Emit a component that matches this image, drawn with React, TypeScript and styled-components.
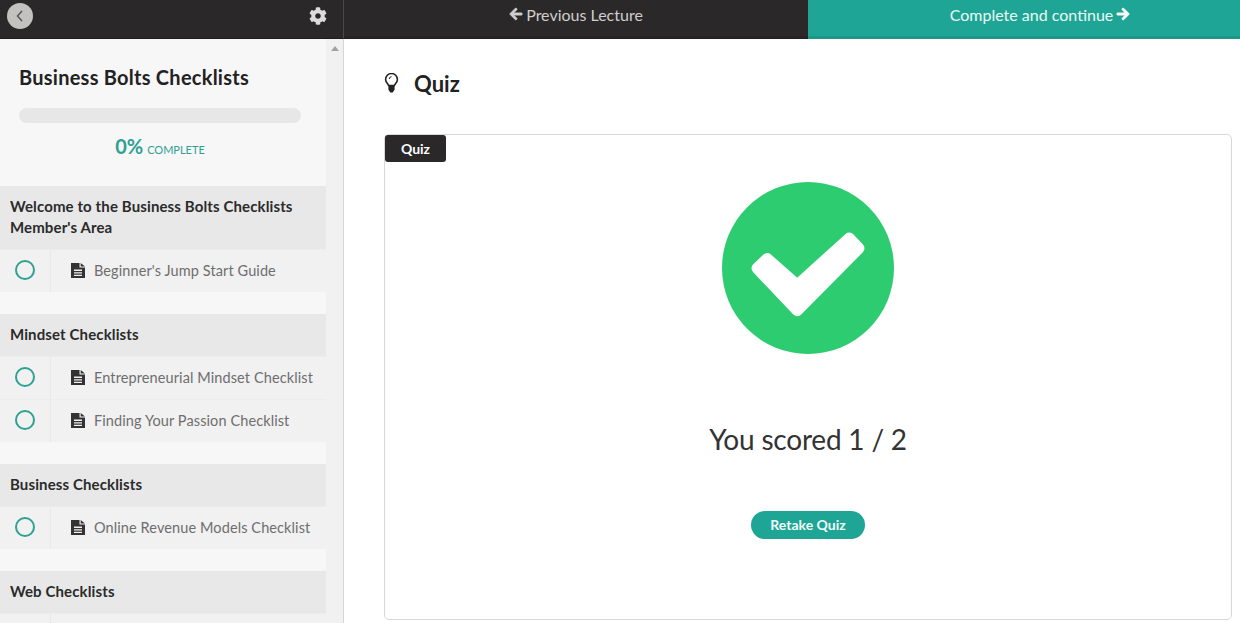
import React from "react";
import styled, { createGlobalStyle } from "styled-components";
import { FaArrowLeft, FaArrowRight, FaCog } from "react-icons/fa";

const Global = createGlobalStyle`
  html, body { margin: 0; padding: 0; height: 623px; overflow: hidden; background: #fff; }
  body { font-family: Lato, "Liberation Sans", sans-serif; color: #2b2b2b; }
  * { box-sizing: border-box; }
`;

const Page = styled.div`
  width: 1240px;
  height: 623px;
  display: flex;
  flex-direction: column;
  overflow: hidden;
`;

const TopBar = styled.header`
  height: 39px;
  flex: none;
  display: flex;
  background: #2a2828;
`;

const BarSide = styled.div`
  width: 344px;
  flex: none;
  display: flex;
  align-items: center;
  justify-content: space-between;
  padding: 0 16px 7px 7px;
  border-right: 1px solid #4a4848;
  border-bottom: 1px solid #1f1e1e;
`;

const BackButton = styled.button`
  width: 26px;
  height: 26px;
  padding: 0;
  border: 0;
  border-radius: 50%;
  background: #c4c1c1;
  display: flex;
  align-items: center;
  justify-content: center;
`;

const NavLink = styled.div<{ $primary?: boolean }>`
  display: flex;
  align-items: center;
  justify-content: center;
  gap: 3px;
  height: 39px;
  width: ${(p) => (p.$primary ? "432px" : "464px")};
  flex: none;
  font-size: 16px;
  padding: ${(p) => (p.$primary ? "0 0 8px 32px" : "0 0 8px 0")};
  color: ${(p) => (p.$primary ? "#eafaf6" : "#d0cece")};
  background: ${(p) => (p.$primary ? "#1fa595" : "#2a2828")};
  border-bottom: 3px solid ${(p) => (p.$primary ? "#1c9788" : "#242222")};
  svg {
    stroke: currentColor;
    stroke-width: 30;
  }
`;

const Body = styled.div`
  flex: 1;
  display: flex;
  min-height: 0;
`;

const Sidebar = styled.aside`
  width: 344px;
  flex: none;
  display: flex;
  border-right: 1px solid #d6d6d6;
  background: #f7f7f7;
`;

const SideList = styled.div`
  width: 326px;
  flex: none;
`;

const Scrollbar = styled.div`
  flex: 1;
  background: #f1f1f1;
  display: flex;
  justify-content: center;
  padding-top: 7px;
`;

const ScrollArrow = styled.div`
  width: 0;
  height: 0;
  border-left: 4px solid transparent;
  border-right: 4px solid transparent;
  border-bottom: 5px solid #a3a3a3;
`;

const CourseHead = styled.div`
  height: 147px;
  padding: 26px 25px 0 19px;
`;

const CourseTitle = styled.h1`
  margin: 0;
  font-size: 20px;
  line-height: 24px;
  font-weight: 700;
  letter-spacing: 0.25px;
  color: #222;
`;

const Progress = styled.div`
  height: 15px;
  margin-top: 19px;
  border-radius: 8px;
  background: #e7e7e7;
`;

const ProgressLabel = styled.div`
  margin-top: 11px;
  text-align: center;
  color: #2fa193;
  font-size: 11px;
  line-height: 24px;
  text-transform: uppercase;
  b {
    font-size: 20px;
    font-weight: 700;
    margin-right: 4px;
  }
`;

const SectionBlock = styled.section`
  padding-bottom: 22px;
`;

const SectionTitle = styled.div`
  background: #e8e8e8;
  padding: 10px 10px 11px;
  font-size: 15px;
  letter-spacing: 0.12px;
  line-height: 21px;
  font-weight: 700;
  color: #2b2b2b;
`;

const Row = styled.div`
  display: flex;
  height: 43px;
  background: #f1f1f1;
  border-top: 1px solid #ececec;
`;

const StatusCell = styled.div`
  width: 51px;
  flex: none;
  display: flex;
  align-items: center;
  justify-content: center;
  padding-bottom: 2px;
  border-right: 1px solid #e8e8e8;
`;

const StatusRing = styled.span`
  width: 20px;
  height: 20px;
  border-radius: 50%;
  border: 2px solid #2fa193;
`;

const RowLabel = styled.div`
  display: flex;
  align-items: center;
  gap: 9px;
  padding: 0 0 2px 20px;
  font-size: 14.5px;
  letter-spacing: 0.1px;
  color: #6e6e6e;
  white-space: nowrap;
`;

const Main = styled.main`
  flex: 1;
  padding: 31px 8px 3px 40px;
  display: flex;
  flex-direction: column;
`;

const LessonHead = styled.div`
  display: flex;
  align-items: center;
  gap: 15px;
  height: 26px;
  margin-bottom: 38px;
`;

const LessonTitle = styled.h2`
  margin: 0;
  font-size: 22px;
  font-weight: 700;
  color: #222;
`;

const Card = styled.div`
  position: relative;
  flex: 1;
  border: 1px solid #d8d8d8;
  border-radius: 5px;
  display: flex;
  flex-direction: column;
  align-items: center;
  padding-top: 47px;
`;

const Tag = styled.div`
  position: absolute;
  left: 0;
  top: 0;
  width: 61px;
  height: 27px;
  padding-bottom: 1px;
  border-radius: 3px;
  background: #2a2828;
  color: #fff;
  font-size: 14px;
  font-weight: 700;
  display: flex;
  align-items: center;
  justify-content: center;
`;

const Score = styled.div`
  margin-top: 65px;
  font-size: 28px;
  line-height: 40px;
  font-weight: 400;
  letter-spacing: -0.2px;
  color: #333;
`;

const Retake = styled.button`
  margin-top: 52px;
  width: 114px;
  height: 28px;
  border: 0;
  padding: 0 0 2px;
  border-radius: 14px;
  background: #1fa595;
  color: #f2fbf9;
  font-family: inherit;
  font-size: 14px;
  font-weight: 700;
`;

const sections = [
  { title: ["Welcome to the Business Bolts Checklists", "Member's Area"], items: ["Beginner's Jump Start Guide"] },
  { title: ["Mindset Checklists"], items: ["Entrepreneurial Mindset Checklist", "Finding Your Passion Checklist"] },
  { title: ["Business Checklists"], items: ["Online Revenue Models Checklist"] },
  { title: ["Web Checklists"], items: [""] },
];

function DocIcon() {
  return (
    <svg width="14" height="15" viewBox="0 0 14 15">
      <path
        fillRule="evenodd"
        fill="#333"
        d="M0 0h8.5v4.5H14V15H0zM3 6.6v1.3h8V6.6zM3 9.2v1.3h8V9.2zM3 11.8v1.3h8v-1.3zM9.7 0 14 3.4H9.7z"
      />
    </svg>
  );
}

export default function App() {
  return (
    <Page>
      <Global />
      <TopBar>
        <BarSide>
          <BackButton aria-label="Back">
            <svg width="14" height="14" viewBox="0 0 14 14" fill="none" stroke="#555" strokeWidth="1.5">
              <path d="M9 2 4.5 7 9 12" />
            </svg>
          </BackButton>
          <FaCog size={18} color="#dcdcdc" />
        </BarSide>
        <NavLink>
          <FaArrowLeft size={14} /> Previous Lecture
        </NavLink>
        <NavLink $primary>
          Complete and continue <FaArrowRight size={14} color="#fff" />
        </NavLink>
      </TopBar>
      <Body>
        <Sidebar>
          <SideList>
            <CourseHead>
              <CourseTitle>Business Bolts Checklists</CourseTitle>
              <Progress />
              <ProgressLabel>
                <b>0%</b>Complete
              </ProgressLabel>
            </CourseHead>
            {sections.map((s) => (
              <SectionBlock key={s.title[0]}>
                <SectionTitle>
                  {s.title.map((t) => (
                    <div key={t}>{t}</div>
                  ))}
                </SectionTitle>
                {s.items.map((it) => (
                  <Row key={it}>
                    <StatusCell>{it && <StatusRing />}</StatusCell>
                    {it && (
                      <RowLabel>
                        <DocIcon />
                        {it}
                      </RowLabel>
                    )}
                  </Row>
                ))}
              </SectionBlock>
            ))}
          </SideList>
          <Scrollbar>
            <ScrollArrow />
          </Scrollbar>
        </Sidebar>
        <Main>
          <LessonHead>
            <svg width="15" height="20" viewBox="0 0 15 20" fill="none">
              <path d="M4.6 12.5C4 10.6 1.6 9.5 1.6 6.4a5.9 5.9 0 0 1 11.8 0c0 3.1-2.4 4.2-3 6.1z" stroke="#222" strokeWidth="1.6" />
              <path d="M4.4 13h6.2v3.6L8.8 19.5H6.2L4.4 16.6z" fill="#222" />
              <path d="M5.2 6a2.4 2.4 0 0 1 2.3-2.3" stroke="#222" strokeWidth="1" />
            </svg>
            <LessonTitle>Quiz</LessonTitle>
          </LessonHead>
          <Card>
            <Tag>Quiz</Tag>
            <svg width="172" height="172" viewBox="0 0 172 172">
              <circle cx="86" cy="86" r="86" fill="#2ecc71" />
              <path
                d="M35 86.3 45.3 76.5 75.3 103 127.3 56 137 66.3 75.3 128.7z"
                fill="#fff"
                stroke="#fff"
                strokeWidth="11"
                strokeLinejoin="round"
              />
            </svg>
            <Score>You scored 1 / 2</Score>
            <Retake>Retake Quiz</Retake>
          </Card>
        </Main>
      </Body>
    </Page>
  );
}
